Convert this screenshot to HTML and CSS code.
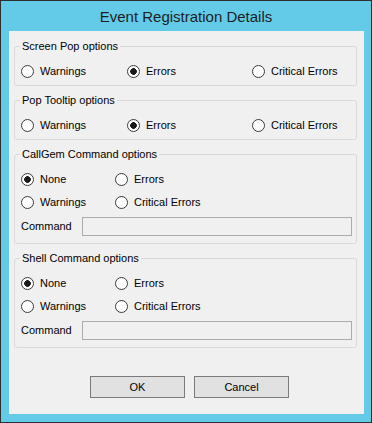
FILE: index.html
```html
<!DOCTYPE html>
<html>
<head>
<meta charset="utf-8">
<link rel="stylesheet" href="styles.css">
</head>
<body>
<div class="window">
  <div class="titlebar">Event Registration Details</div>
  <div class="content">
    <fieldset class="group">
      <legend>Screen Pop options</legend>
      <div class="row3">
        <label class="opt"><span class="radio"></span>Warnings</label>
        <label class="opt"><span class="radio checked"></span>Errors</label>
        <label class="opt"><span class="radio"></span>Critical Errors</label>
      </div>
    </fieldset>
    <fieldset class="group">
      <legend>Pop Tooltip options</legend>
      <div class="row3">
        <label class="opt"><span class="radio"></span>Warnings</label>
        <label class="opt"><span class="radio checked"></span>Errors</label>
        <label class="opt"><span class="radio"></span>Critical Errors</label>
      </div>
    </fieldset>
    <fieldset class="group">
      <legend>CallGem Command options</legend>
      <div class="grid2">
        <label class="opt"><span class="radio checked"></span>None</label>
        <label class="opt"><span class="radio"></span>Errors</label>
        <label class="opt"><span class="radio"></span>Warnings</label>
        <label class="opt"><span class="radio"></span>Critical Errors</label>
      </div>
      <div class="cmdrow"><span class="cmdlabel">Command</span><span class="textbox"></span></div>
    </fieldset>
    <fieldset class="group">
      <legend>Shell Command options</legend>
      <div class="grid2">
        <label class="opt"><span class="radio checked"></span>None</label>
        <label class="opt"><span class="radio"></span>Errors</label>
        <label class="opt"><span class="radio"></span>Warnings</label>
        <label class="opt"><span class="radio"></span>Critical Errors</label>
      </div>
      <div class="cmdrow"><span class="cmdlabel">Command</span><span class="textbox"></span></div>
    </fieldset>
    <div class="buttons">
      <button class="btn">OK</button>
      <button class="btn">Cancel</button>
    </div>
  </div>
</div>
</body>
</html>
```

FILE: styles.css
```css
html, body {
  margin: 0;
  padding: 0;
  background: #ffffff;
}
.window {
  width: 372px;
  height: 423px;
  box-sizing: border-box;
  border: 1px solid #2e2e2e;
  background: #63cbe8;
  display: flex;
  flex-direction: column;
}
.titlebar {
  height: 30px;
  display: flex;
  align-items: center;
  justify-content: center;
  font-family: "Liberation Sans", Arial, sans-serif;
  font-size: 15px;
  color: #1e1e1e;
  padding-top: 1px;
  box-sizing: border-box;
}
.content {
  margin: 0 7px 8px 8px;
  height: 383px;
  box-sizing: border-box;
  background: #f0f0f0;
  padding: 9px 7px 0 5px;
  display: flex;
  flex-direction: column;
  gap: 8px;
  font-family: "Liberation Sans", Arial, sans-serif;
  font-size: 11px;
  line-height: 13px;
  color: #000;
}
.group {
  margin: 0;
  padding: 12px 4px 7px 6px;
  border: 1px solid #d9d9d9;
  border-radius: 3px;
  min-width: 0;
}
.group legend {
  padding: 0 2px;
  margin-left: -1px;
  line-height: 13px;
}
.row3 {
  display: grid;
  grid-template-columns: 106px 125px 1fr;
}
.grid2 {
  display: grid;
  grid-template-columns: 94px 1fr;
  row-gap: 10px;
}
.opt {
  display: flex;
  align-items: center;
  height: 13px;
  white-space: nowrap;
}
.radio {
  width: 13px;
  height: 13px;
  box-sizing: border-box;
  border: 1px solid #3c3c3c;
  border-radius: 50%;
  background: #ffffff;
  margin-right: 6px;
  flex: none;
}
.radio.checked {
  background: radial-gradient(circle at center, #1a1a1a 0, #1a1a1a 3px, #ffffff 3.6px);
}
.cmdrow {
  display: flex;
  align-items: center;
  margin-top: 8px;
  height: 19px;
}
.cmdlabel {
  width: 61px;
  flex: none;
}
.textbox {
  flex: 1;
  height: 19px;
  box-sizing: border-box;
  border: 1px solid #acacac;
  background: #f0f0f0;
}
.buttons {
  display: flex;
  gap: 9px;
  padding-left: 76px;
  margin-top: 20px;
}
.btn {
  width: 95px;
  height: 22px;
  box-sizing: border-box;
  border: 1px solid #7a7a7a;
  background: #e1e1e1;
  font-family: "Liberation Sans", Arial, sans-serif;
  font-size: 11px;
  color: #000;
  padding: 0;
  margin: 0;
  border-radius: 0;
}
```
